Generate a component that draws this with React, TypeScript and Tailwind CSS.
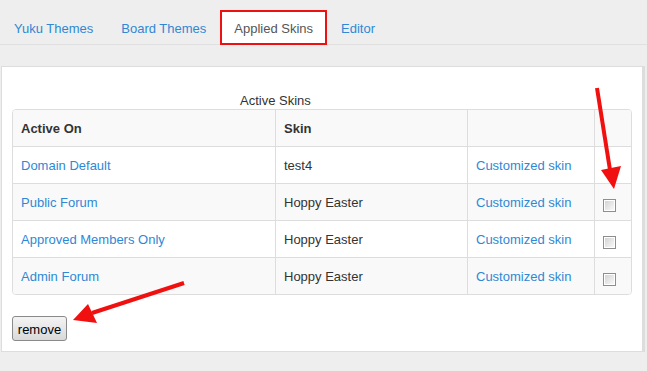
import type { ReactNode } from 'react';

type Row = { place: string; skin: string; custom: boolean; check: boolean };

const rows: Row[] = [
  { place: 'Domain Default', skin: 'test4', custom: true, check: false },
  { place: 'Public Forum', skin: 'Hoppy Easter', custom: true, check: true },
  { place: 'Approved Members Only', skin: 'Hoppy Easter', custom: true, check: true },
  { place: 'Admin Forum', skin: 'Hoppy Easter', custom: true, check: true },
];

function Cell({
  children,
  last,
  end,
  shade,
  className = '',
}: {
  children?: ReactNode;
  last?: boolean;
  end?: boolean;
  shade?: boolean;
  className?: string;
}) {
  return (
    <div
      className={[
        'flex items-center pl-[8px] pt-[2px] border-[#dddddd]',
        last ? 'h-[36px]' : 'h-[37px] border-b',
        end ? '' : 'border-r',
        shade ? 'bg-[#f9f9f9]' : 'bg-white',
        className,
      ].join(' ')}
    >
      {children}
    </div>
  );
}

function Checkbox() {
  return (
    <span className="mt-[5px] block w-[13px] h-[13px] border border-[#8e8e8e] bg-white p-px">
      <span className="block w-full h-full bg-linear-to-br from-[#d4d4d4] to-[#f8f8f8]" />
    </span>
  );
}

function Tab({ label, active }: { label: string; active?: boolean }) {
  if (active) {
    return (
      <div className="mt-[10px] h-[35px] px-[12px] flex items-center pt-[3px] border-2 border-[#ee1111] bg-white text-[#555555]">
        {label}
      </div>
    );
  }
  return (
    <div className="h-full px-[14px] pt-[14px] flex items-center text-[#2f88d4]">
      {label}
    </div>
  );
}

export default function App() {
  return (
    <div className="relative w-[647px] h-[371px] overflow-hidden bg-[#eeeeee] font-['Liberation_Sans',Arial,sans-serif] text-[13px] text-[#333333]">
      <div className="flex h-[45px] border-b border-[#e0e0e0]">
        <Tab label="Yuku Themes" />
        <Tab label="Board Themes" />
        <Tab label="Applied Skins" active />
        <Tab label="Editor" />
      </div>

      <div className="mt-[21px] ml-px w-[644px] h-[286px] border border-r-[3px] border-[#dddddd] bg-white px-[10px] pt-[26px]">
        <div className="pl-[228px] leading-[15px] h-[16px]">Active Skins</div>
        <div className="w-[620px] border border-[#dddddd] rounded-[4px] overflow-hidden grid grid-cols-[263px_192px_127px_36px]">
          <Cell shade className="font-bold">Active On</Cell>
          <Cell shade className="font-bold">Skin</Cell>
          <Cell shade />
          <Cell shade end />
          {rows.map((r, i) => {
            const last = i === rows.length - 1;
            const shade = i % 2 === 1;
            return [
              <Cell key={r.place + 'a'} last={last} shade={shade} className="text-[#2f88d4]">
                {r.place}
              </Cell>,
              <Cell key={r.place + 'b'} last={last} shade={shade}>
                {r.skin}
              </Cell>,
              <Cell key={r.place + 'c'} last={last} shade={shade} className="text-[#2f88d4]">
                {r.custom ? 'Customized skin' : ''}
              </Cell>,
              <Cell key={r.place + 'd'} last={last} shade={shade} end>
                {r.check ? <Checkbox /> : null}
              </Cell>,
            ];
          })}
        </div>
        <button className="mt-[21px] w-[55px] h-[25px] rounded-[3px] border border-[#8a8a8a] bg-linear-to-b from-[#f4f4f4] to-[#d9d9d9] text-black text-[13px] leading-none pt-px">
          remove
        </button>
      </div>

      <svg className="absolute inset-0 pointer-events-none" width="647" height="371">
        <line x1="597" y1="88" x2="610" y2="170" stroke="#f01010" strokeWidth="4" />
        <polygon points="614,189 601,170 621,166" fill="#f01010" />
        <line x1="184" y1="283" x2="92" y2="313" stroke="#f01010" strokeWidth="4" />
        <polygon points="73,320 88,304 97,323" fill="#f01010" />
      </svg>
    </div>
  );
}
